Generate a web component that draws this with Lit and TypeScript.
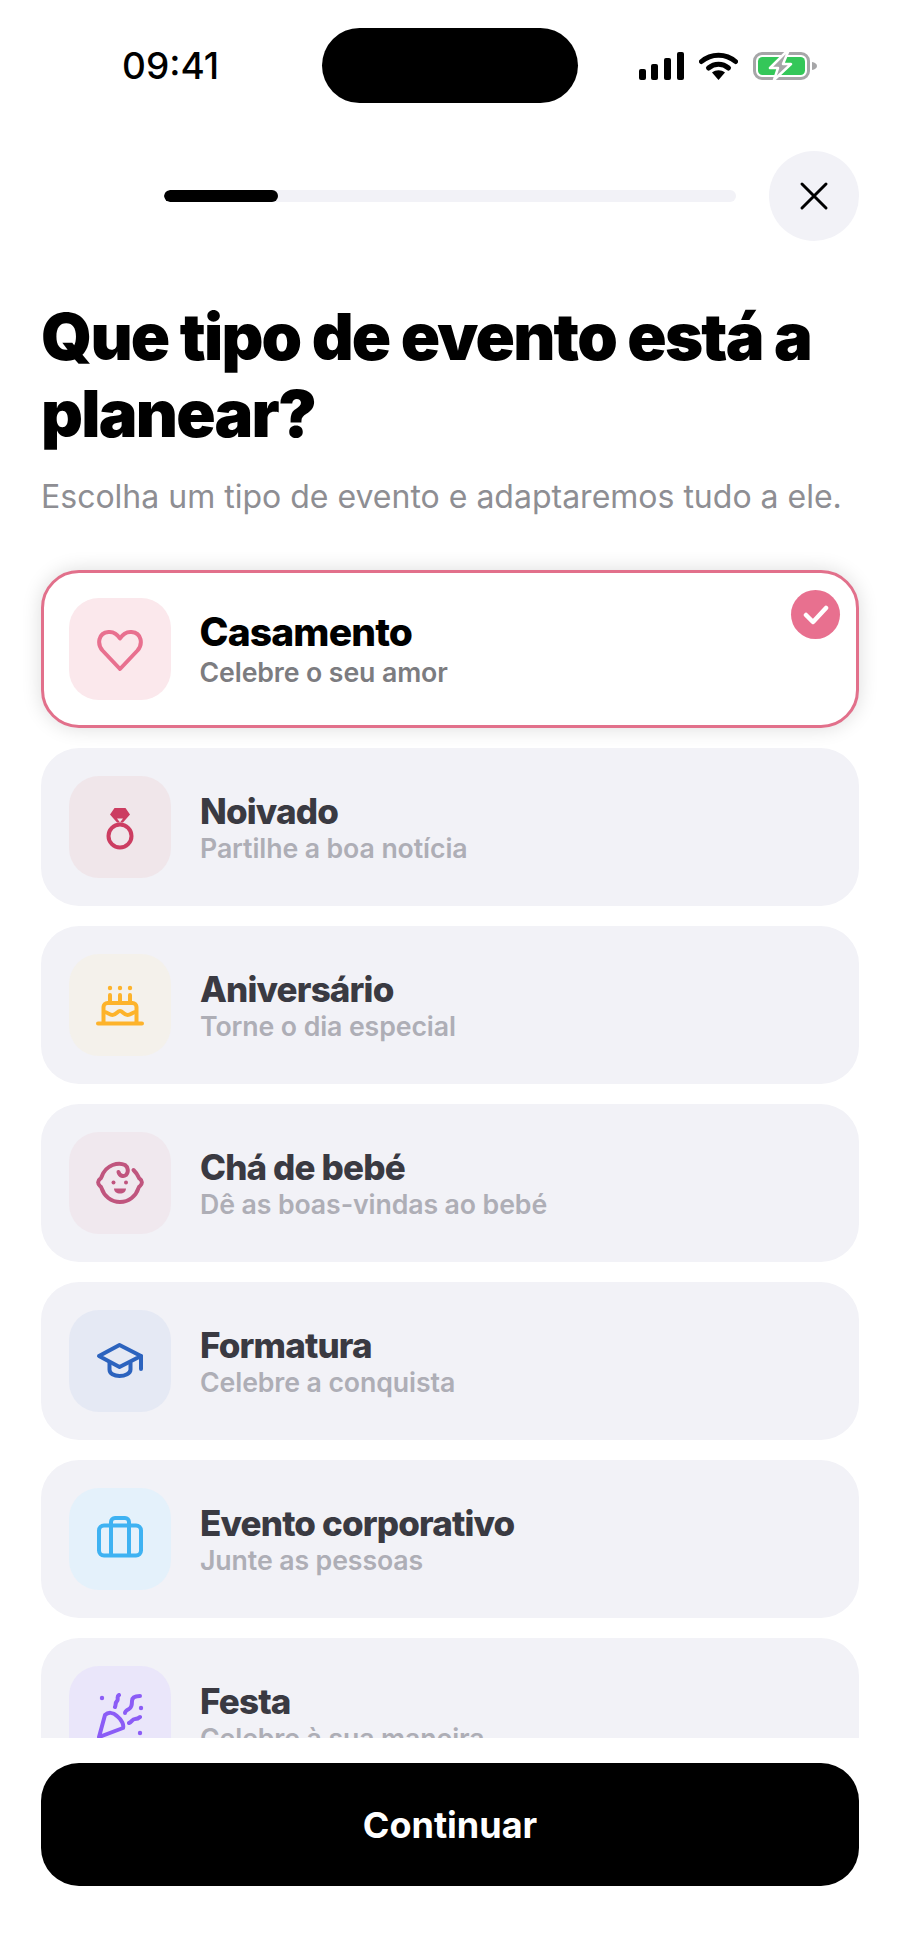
import { LitElement, html, css, svg } from 'lit';
import { customElement } from 'lit/decorators.js';

const eventos = [
  {
    nome: 'Casamento', desc: 'Celebre o seu amor', cor: '#e8708f', fundo: '#fbe8ec', ativo: true,
    icone: svg`<path d="M24 44 6.500 25.500C1 19 2 8 12.500 7c5-.5 9 2.500 11.500 6.500C26.500 9.500 30.500 6.500 35.500 7 46 8 47 19 41.500 25.500Z"/>`
  },
  {
    nome: 'Noivado', desc: 'Partilhe a boa notícia', cor: '#cc3d61', fundo: '#f0e6ea',
    icone: svg`<circle cx="24" cy="33" r="11.5"/>
      <path d="M18.500 5h11l4.500 6.500-7 8h-6l-7-8Z" fill="#cc3d61" stroke="none"/>
      <path d="M21 15.500h6l-3 4Z" fill="#f0e6ea" stroke="none"/>`
  },
  {
    nome: 'Aniversário', desc: 'Torne o dia especial', cor: '#fdb32b', fundo: '#f4f1eb',
    icone: svg`<path d="M2 42.500h44M7.500 42V26a4 4 0 0 1 4-4h25a4 4 0 0 1 4 4v16M14 21v-7M24 21v-7M34 21v-7"/>
      <path d="M8 31c4 0 5 3 8.500 3s5-4 7.500-4 4 4 7.500 4 5-3 8.500-3"/>
      <g fill="#fdb32b" stroke="none"><circle cx="14" cy="7" r="2.200"/><circle cx="24" cy="7" r="2.200"/><circle cx="34" cy="7" r="2.200"/></g>`
  },
  {
    nome: 'Chá de bebé', desc: 'Dê as boas-vindas ao bebé', cor: '#c0557e', fundo: '#f0e8ee',
    icone: svg`<path d="M22.500 13c1 4 5 5 7.500 3 3-3 2-8-1-10-6-3-19-1-23.500 12-.3 1-.5 1.500-1.500 2-2.500 1.500-2.500 5 0 7 1 .5 1.200 1 1.500 2C8 37 15 43 24 43s16-6 18.500-14c.3-1 .5-1.500 1.500-2 2.500-2 2.500-5.500 0-7-1-.5-1.200-1-1.500-2-1-2.500-3-5-5-7"/>
      <g fill="#c0557e" stroke="none"><circle cx="17.500" cy="23.500" r="2"/><circle cx="30" cy="23.500" r="2"/>
      <path d="M18 29.500h12c0 3-2.500 5-6 5s-6-2-6-5Z"/></g>`
  },
  {
    nome: 'Formatura', desc: 'Celebre a conquista', cor: '#2c63be', fundo: '#e5e9f4',
    icone: svg`<path d="M3 19 23.500 8 45 19 23.500 30Z"/><path d="M45 19v13M13.500 26v6.500c0 4 4.500 6.500 10 6.500s11-2.500 11-6.500V26"/>`
  },
  {
    nome: 'Evento corporativo', desc: 'Junte as pessoas', cor: '#3eb2f2', fundo: '#e4f1fb',
    icone: svg`<rect x="3" y="10.500" width="42" height="30" rx="5"/><path d="M15 40V7a4 4 0 0 1 4-4h10a4 4 0 0 1 4 4v33"/>`
  },
  {
    nome: 'Festa', desc: 'Celebre à sua maneira', cor: '#8b5cf6', fundo: '#eae6fa',
    icone: svg`<path d="M3 44 9 22c3-3 8-3 12 1 5 4 7 9 6 12Z"/>
      <path d="M23 2c-3 2 0 4-2 6s-1 4-2 6M44 3c-5 0-8 1-8 5s-1 7-3 8-4 2-4 4M33 30c3-1 3-4 6-4s4-1 5-2"/>
      <g fill="#8b5cf6" stroke="none"><circle cx="6" cy="5" r="2.200"/><circle cx="45" cy="15" r="2.200"/><circle cx="44" cy="40" r="2.200"/></g>`
  }
];

@customElement('app-root')
export class AppRoot extends LitElement {
  static styles = css`
    :host {
      display: block;
      width: 900px;
      height: 1955px;
      background: #fff;
      font-family: Inter, "Liberation Sans", sans-serif;
      color: #000;
    }

    .pagina {
      height: 1955px;
      display: flex;
      flex-direction: column;
      overflow: hidden;
    }

    .status {
      height: 151px;
      flex: none;
      display: grid;
      grid-template-columns: 322px 256px 1fr;
      align-items: start;
    }

    .hora {
      margin: 46px 0 0 122px;
      font-size: 37px;
      line-height: 40px;
      font-weight: 500;
    }

    .ilha {
      margin-top: 28px;
      height: 75px;
      border-radius: 38px;
      background: #000;
    }

    .icones {
      margin: 52px 0 0 61px;
      display: flex;
      align-items: flex-start;
    }

    .sinal { margin-right: 15px; }
    .wifi { margin-right: 15px; }

    .topo {
      flex: none;
      display: flex;
      align-items: center;
      gap: 33px;
      padding: 0 41px 0 164px;
    }

    .trilho {
      flex: 1;
      height: 12px;
      border-radius: 6px;
      background: #f2f2f7;
      overflow: hidden;
    }

    .progresso {
      height: 100%;
      border-radius: 6px;
      background: #000;
    }

    .fechar {
      width: 90px;
      height: 90px;
      border-radius: 50%;
      background: #f2f2f7;
      display: flex;
      align-items: center;
      justify-content: center;
    }

    h1 {
      flex: none;
      margin: 57px 0 0;
      padding: 0 41px;
      font-size: 65px;
      line-height: 77px;
      font-weight: 900;
      letter-spacing: -1.76px;
    }

    .subtitulo {
      flex: none;
      margin: 25px 0 0;
      padding: 0 41px;
      font-size: 32px;
      line-height: 40px;
      color: #8e8e93;
      white-space: nowrap;
    }

    .lista {
      flex: none;
      box-sizing: border-box;
      height: 1221px;
      padding: 53px 41px 0;
      display: flex;
      flex-direction: column;
      gap: 20px;
      overflow: hidden;
    }

    .cartao {
      flex: none;
      position: relative;
      box-sizing: border-box;
      height: 158px;
      padding: 28px;
      border-radius: 38px;
      background: #f2f2f7;
      display: flex;
      align-items: center;
      gap: 29px;
    }

    .cartao.ativo {
      background: #fff;
      border: 3.500px solid #e2708b;
      padding: 24.500px;
      box-shadow: 0 0 20px rgba(0, 0, 0, 0.14);
    }

    .caixa {
      width: 102px;
      height: 102px;
      flex: none;
      border-radius: 30px;
      display: flex;
      align-items: center;
      justify-content: center;
    }

    .caixa svg {
      fill: none;
      stroke-width: 4;
      stroke-linecap: round;
      stroke-linejoin: round;
    }

    .nome {
      font-size: 35px;
      line-height: 42px;
      font-weight: 800;
      letter-spacing: -0.85px;
      color: #3a3a42;
    }

    .desc {
      font-size: 26.700px;
      line-height: 32px;
      font-weight: 600;
      letter-spacing: -0.1px;
      color: #aeaeb6;
    }

    .ativo .nome { color: #000; font-size: 39px; }
    .ativo .desc { color: #7c7c80; margin-top: 3px; }

    .marca {
      position: absolute;
      top: 17px;
      right: 16px;
      width: 49px;
      height: 49px;
      border-radius: 50%;
      background: #e8708f;
      display: flex;
      align-items: center;
      justify-content: center;
    }

    .rodape {
      flex: 1;
      background: #fff;
      padding: 25px 41px 0;
    }

    .continuar {
      height: 123px;
      border-radius: 38px;
      background: #000;
      color: #fff;
      font-size: 36px;
      font-weight: 700;
      display: flex;
      align-items: center;
      justify-content: center;
    }
  `;

  render() {
    return html`
      <div class="pagina">
        <div class="status">
          <div class="hora">09:41</div>
          <div class="ilha"></div>
          <div class="icones">
            <svg class="sinal" width="45" height="28" viewBox="0 0 45 28" fill="#000">
              <rect x="0" y="17" width="7" height="11" rx="2"/>
              <rect x="12" y="12" width="7" height="16" rx="2"/>
              <rect x="25" y="6" width="7" height="22" rx="2"/>
              <rect x="38" y="0" width="7" height="28" rx="2"/>
            </svg>
            <svg class="wifi" width="39" height="28" viewBox="0 0 39 28">
              <path d="M2.500 9.500C12 1 27 1 36.500 9.500" fill="none" stroke="#000" stroke-width="5" stroke-linecap="round"/>
              <path d="M9.500 16c6-5 14-5 20 0" fill="none" stroke="#000" stroke-width="5" stroke-linecap="round"/>
              <path d="M13 20.500c4-3 9-3 13 0L19.500 28Z" fill="#000"/>
            </svg>
            <svg width="64" height="28" viewBox="0 0 64 28">
              <rect x="1.500" y="1.500" width="54" height="25" rx="7.500" fill="none" stroke="#a6a6a8" stroke-width="3"/>
              <rect x="5" y="5" width="47" height="18" rx="4.500" fill="#34c759"/>
              <path d="M59 10c3 .5 5 2 5 4s-2 3.500-5 4Z" fill="#a6a6a8"/>
              <path d="M33 0 17 16h8l-4 12 17-16h-8l5-12Z" fill="#a6a6a8" stroke="#fff" stroke-width="2.500" stroke-linejoin="round"/>
            </svg>
          </div>
        </div>

        <div class="topo">
          <div class="trilho"><div class="progresso" style="width:${(1 / 5) * 100}%"></div></div>
          <div class="fechar">
            <svg width="32" height="32" viewBox="0 0 32 32" fill="none" stroke="#000" stroke-width="3" stroke-linecap="round">
              <path d="M4 4l24 24M28 4 4 28"/>
            </svg>
          </div>
        </div>

        <h1>Que tipo de evento está a planear?</h1>
        <p class="subtitulo">Escolha um tipo de evento e adaptaremos tudo a ele.</p>

        <div class="lista">
          ${eventos.map(e => html`
            <div class="cartao ${e.ativo ? 'ativo' : ''}">
              <div class="caixa" style="background:${e.fundo}">
                <svg width="48" height="48" viewBox="0 0 48 48" style="stroke:${e.cor}">${e.icone}</svg>
              </div>
              <div>
                <div class="nome">${e.nome}</div>
                <div class="desc">${e.desc}</div>
              </div>
              ${e.ativo ? html`
                <div class="marca">
                  <svg width="26" height="22" viewBox="0 0 26 22" fill="none" stroke="#fff" stroke-width="4.500" stroke-linecap="round" stroke-linejoin="round">
                    <path d="M3 11l7 7L23 4"/>
                  </svg>
                </div>` : ''}
            </div>
          `)}
        </div>

        <div class="rodape">
          <div class="continuar">Continuar</div>
        </div>
      </div>
    `;
  }
}
